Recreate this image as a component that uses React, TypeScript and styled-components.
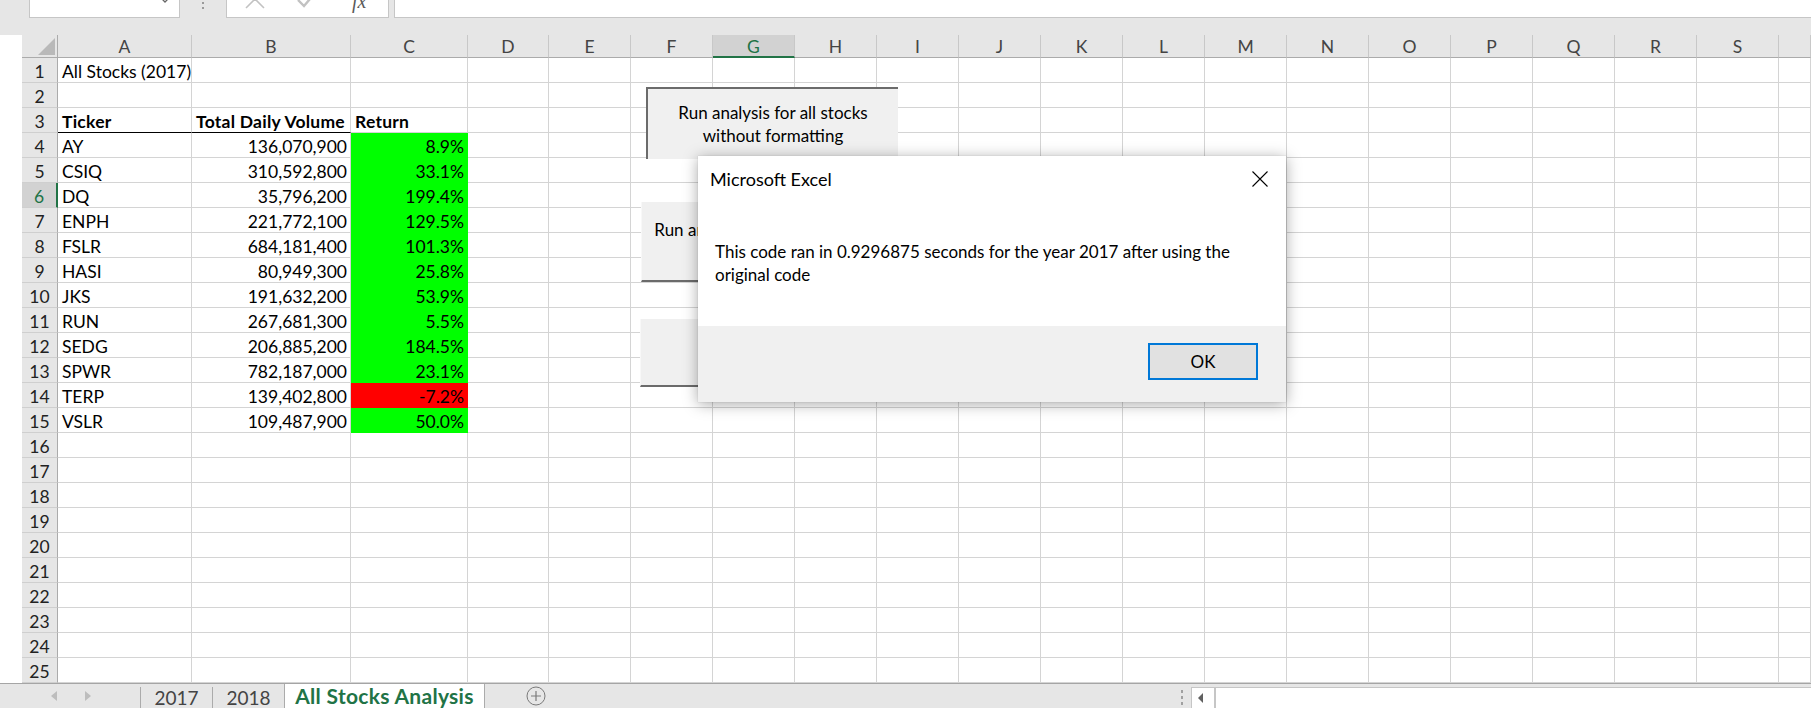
import React from "react";
import styled, { createGlobalStyle } from "styled-components";

const GlobalStyle = createGlobalStyle`
  html, body { margin: 0; padding: 0; background: #ffffff; }
  body { width: 1811px; height: 708px; overflow: hidden; font-family: Lato, "Liberation Sans", sans-serif; }
  *, *::before, *::after { box-sizing: border-box; }
`;

const Window = styled.div`
  position: relative;
  width: 1811px;
  height: 708px;
  display: flex;
  flex-direction: column;
  overflow: hidden;
  background: #ffffff;
  color: #000;
`;

/* ---------- formula bar ---------- */
const FormulaBar = styled.div`
  flex: none;
  height: 18px;
  display: flex;
  align-items: stretch;
  background: #e6e6e6;
  overflow: hidden;
  padding-left: 29px;
`;

const NameBox = styled.div`
  width: 151px;
  background: #ffffff;
  border: 1px solid #c6c6c6;
  border-top: none;
  display: flex;
  justify-content: flex-end;
  align-items: flex-start;
  padding-right: 9px;
`;

const Grip = styled.div`
  width: 46px;
  display: flex;
  flex-direction: column;
  align-items: center;
  gap: 3px;
  margin-top: -3px;
`;

const GripDot = styled.span`
  width: 2px;
  height: 2px;
  background: #9a9a9a;
`;

const FxBox = styled.div`
  width: 163px;
  background: #ffffff;
  border: 1px solid #c6c6c6;
  border-top: none;
  display: flex;
  align-items: flex-start;
  padding-left: 18px;
  gap: 31px;
`;

const FxIcon = styled.span`
  display: block;
  margin-top: -11px;
  line-height: 0;
`;

const FxText = styled.span`
  font-family: "Liberation Serif", "DejaVu Serif", serif;
  font-style: italic;
  font-size: 20px;
  line-height: 20px;
  color: #5a5a5a;
  margin-top: -9px;
  margin-left: 5px;
`;

const FormulaInput = styled.div`
  flex: 1;
  margin-left: 5px;
  background: #ffffff;
  border: 1px solid #c6c6c6;
  border-top: none;
  border-right: none;
`;

const HeaderGap = styled.div`
  flex: none;
  height: 17px;
  background: #e6e6e6;
`;

/* ---------- sheet grid ---------- */
const Sheet = styled.div`
  flex: none;
  height: 648px;
  padding-left: 22px;
  display: grid;
  grid-template-columns: 36px 134px 159px 117px 81px repeat(15, 82px) 1fr;
  grid-template-rows: 23px repeat(25, 25px);
  font-size: 17.5px;
`;

const Corner = styled.div`
  background: #e6e6e6;
  border-right: 1px solid #ababab;
  border-bottom: 1px solid #ababab;
  display: flex;
  align-items: flex-end;
  justify-content: flex-end;
  padding: 0 2px 2px 0;
`;

const ColHeader = styled.div<{ $active?: boolean }>`
  background: ${(p) => (p.$active ? "#d2d2d2" : "#e6e6e6")};
  color: ${(p) => (p.$active ? "#217346" : "#444444")};
  border-right: 1px solid #c8c8c8;
  border-bottom: ${(p) => (p.$active ? "2px solid #217346" : "1px solid #ababab")};
  display: flex;
  align-items: center;
  justify-content: center;
  line-height: 21px;
  padding-top: 1px;
`;

const RowHeader = styled.div<{ $active?: boolean }>`
  background: ${(p) => (p.$active ? "#d2d2d2" : "#e6e6e6")};
  color: ${(p) => (p.$active ? "#217346" : "#222222")};
  border-right: ${(p) => (p.$active ? "2px solid #217346" : "1px solid #ababab")};
  border-bottom: 1px solid #cfcfcf;
  display: flex;
  align-items: flex-end;
  justify-content: center;
  line-height: 21px;
`;

const Cell = styled.div<{
  $align?: "left" | "right";
  $bold?: boolean;
  $fill?: string;
  $underline?: boolean;
}>`
  display: flex;
  align-items: flex-end;
  justify-content: ${(p) => (p.$align === "right" ? "flex-end" : "flex-start")};
  padding: 0 3px 0 4px;
  line-height: 21px;
  white-space: nowrap;
  font-weight: ${(p) => (p.$bold ? 700 : 400)};
  letter-spacing: ${(p) => (p.$bold ? "0.25px" : "0")};
  background: ${(p) => p.$fill ?? "transparent"};
  border-right: 1px solid ${(p) => p.$fill ?? "#d4d4d4"};
  border-bottom: 1px solid
    ${(p) => (p.$underline ? "#000000" : p.$fill ?? "#d4d4d4")};
`;

/* ---------- sheet tabs ---------- */
const TabBar = styled.div`
  flex: none;
  height: 25px;
  display: flex;
  align-items: stretch;
  background: #e6e6e6;
  border-top: 1px solid #a5a5a5;
  font-size: 19px;
  line-height: 24px;
`;

const NavArea = styled.div`
  width: 140px;
  display: flex;
  align-items: center;
  padding-left: 51px;
  gap: 28px;
`;

const NavArrow = styled.span<{ $dir: "left" | "right" }>`
  width: 0;
  height: 0;
  border-top: 5px solid transparent;
  border-bottom: 5px solid transparent;
  ${(p) =>
    p.$dir === "left"
      ? "border-right: 6px solid #bdbdbd;"
      : "border-left: 6px solid #bdbdbd;"}
`;

const Tab = styled.div<{ $active?: boolean; $width: number }>`
  width: ${(p) => p.$width}px;
  display: flex;
  justify-content: center;
  border-left: 1px solid #ababab;
  border-right: ${(p) => (p.$active ? "1px solid #ababab" : "none")};
  margin-top: ${(p) => (p.$active ? "0" : "3px")};
  line-height: ${(p) => (p.$active ? "24px" : "21px")};
  background: ${(p) => (p.$active ? "#ffffff" : "transparent")};
  color: ${(p) => (p.$active ? "#217346" : "#444444")};
  font-weight: ${(p) => (p.$active ? 700 : 400)};
  font-size: ${(p) => (p.$active ? "21px" : "19px")};
  letter-spacing: ${(p) => (p.$active ? "0.3px" : "0")};
  white-space: nowrap;
`;

const AddSheet = styled.div`
  margin-left: 41px;
  display: flex;
  align-items: center;
`;

const TabSpacer = styled.div`
  flex: 1;
`;

const BottomGrip = styled.div`
  width: 19px;
  display: flex;
  flex-direction: column;
  align-items: center;
  justify-content: center;
  gap: 3px;
  padding-top: 2px;
`;

const BottomDot = styled.span`
  width: 2px;
  height: 3px;
  background: #a0a0a0;
`;

const HScroll = styled.div`
  width: 620px;
  margin-top: 3px;
  background: #ffffff;
  border-top: 1px solid #c6c6c6;
  border-left: 1px solid #c6c6c6;
  display: flex;
`;

const ScrollArrowBox = styled.div`
  width: 24px;
  border-right: 2px solid #c6c6c6;
  display: flex;
  align-items: center;
  justify-content: center;
  padding-right: 6px;
`;

const ScrollArrow = styled.span`
  width: 0;
  height: 0;
  border-top: 5px solid transparent;
  border-bottom: 5px solid transparent;
  border-right: 5px solid #606060;
`;

/* ---------- floating shapes ---------- */
const ShapeButton = styled.div<{
  $left: number;
  $top: number;
  $width: number;
  $height: number;
  $raised?: boolean;
}>`
  position: absolute;
  left: ${(p) => p.$left}px;
  top: ${(p) => p.$top}px;
  width: ${(p) => p.$width}px;
  height: ${(p) => p.$height}px;
  background: #f0f0f0;
  border-top: ${(p) => (p.$raised ? "2px solid #6b6b6b" : "none")};
  border-left: ${(p) => (p.$raised ? "2px solid #6b6b6b" : "1px solid #f8f8f8")};
  border-bottom: ${(p) => (p.$raised ? "none" : "2px solid #6b6b6b")};
  display: flex;
  align-items: center;
  justify-content: center;
  text-align: center;
  font-size: 17px;
  line-height: 23px;
  white-space: nowrap;
`;

/* ---------- message box ---------- */
const Dialog = styled.div`
  position: absolute;
  left: 698px;
  top: 156px;
  width: 588px;
  height: 246px;
  background: #ffffff;
  box-shadow: 0 2px 14px rgba(0, 0, 0, 0.34), 0 0 1px rgba(0, 0, 0, 0.2);
  display: flex;
  flex-direction: column;
`;

const DialogTitleBar = styled.div`
  height: 46px;
  display: flex;
  align-items: center;
  justify-content: space-between;
  padding: 0 18px 0 12px;
  font-size: 18px;
`;

const CloseIcon = styled.span`
  display: block;
  line-height: 0;
`;

const DialogBody = styled.div`
  flex: 1;
  padding: 39px 17px 0 17px;
  font-size: 17px;
  line-height: 22.5px;
`;

const DialogFooter = styled.div`
  height: 76px;
  background: #f0f0f0;
  display: flex;
  justify-content: flex-end;
  align-items: flex-start;
  padding: 17px 28px 0 0;
`;

const OkButton = styled.div`
  width: 110px;
  height: 37px;
  border: 2px solid #0078d7;
  background: #e1e1e1;
  display: flex;
  align-items: center;
  justify-content: center;
  font-size: 17px;
`;

const COLS = ["A", "B", "C", "D", "E", "F", "G", "H", "I", "J", "K", "L", "M", "N", "O", "P", "Q", "R", "S"];

const STOCKS: [string, string, string][] = [
  ["AY", "136,070,900", "8.9%"],
  ["CSIQ", "310,592,800", "33.1%"],
  ["DQ", "35,796,200", "199.4%"],
  ["ENPH", "221,772,100", "129.5%"],
  ["FSLR", "684,181,400", "101.3%"],
  ["HASI", "80,949,300", "25.8%"],
  ["JKS", "191,632,200", "53.9%"],
  ["RUN", "267,681,300", "5.5%"],
  ["SEDG", "206,885,200", "184.5%"],
  ["SPWR", "782,187,000", "23.1%"],
  ["TERP", "139,402,800", "-7.2%"],
  ["VSLR", "109,487,900", "50.0%"],
];

function renderCell(row: number, col: string) {
  const key = `${col}${row}`;
  if (row === 1 && col === "A") return <Cell key={key}>All Stocks (2017)</Cell>;
  if (row === 3) {
    if (col === "A") return <Cell key={key} $bold $underline>Ticker</Cell>;
    if (col === "B") return <Cell key={key} $bold $underline>Total Daily Volume</Cell>;
    if (col === "C") return <Cell key={key} $bold>Return</Cell>;
  }
  if (row >= 4 && row <= 15) {
    const [ticker, volume, ret] = STOCKS[row - 4];
    if (col === "A") return <Cell key={key}>{ticker}</Cell>;
    if (col === "B") return <Cell key={key} $align="right">{volume}</Cell>;
    if (col === "C") {
      const fill = ret.startsWith("-") ? "#ff0000" : "#00ff00";
      return (
        <Cell key={key} $align="right" $fill={fill}>
          {ret}
        </Cell>
      );
    }
  }
  return <Cell key={key} />;
}

export default function App() {
  const rows = Array.from({ length: 25 }, (_, i) => i + 1);
  return (
    <>
      <GlobalStyle />
      <Window>
        <FormulaBar>
          <NameBox>
            <svg width="10" height="6" viewBox="0 0 10 6" style={{ marginTop: -3 }}>
              <path d="M1 1 L5 5 L9 1" fill="none" stroke="#666" strokeWidth="1.3" />
            </svg>
          </NameBox>
          <Grip>
            <GripDot />
            <GripDot />
            <GripDot />
          </Grip>
          <FxBox>
            <FxIcon>
              <svg width="20" height="20" viewBox="0 0 20 20">
                <path d="M1 1 L19 19 M19 1 L1 19" stroke="#c2c2c2" strokeWidth="1.6" fill="none" />
              </svg>
            </FxIcon>
            <FxIcon>
              <svg width="20" height="20" viewBox="0 0 20 20">
                <path d="M2 11 L8 17 L19 4" stroke="#c2c2c2" strokeWidth="2.4" fill="none" />
              </svg>
            </FxIcon>
            <FxText>fx</FxText>
          </FxBox>
          <FormulaInput />
        </FormulaBar>
        <HeaderGap />
        <Sheet>
          <Corner>
            <svg width="17" height="17" viewBox="0 0 17 17">
              <polygon points="17,0 17,17 0,17" fill="#b9b9b9" />
            </svg>
          </Corner>
          {COLS.map((c) => (
            <ColHeader key={c} $active={c === "G"}>
              {c}
            </ColHeader>
          ))}
          <ColHeader />
          {rows.map((r) => (
            <React.Fragment key={r}>
              <RowHeader $active={r === 6}>{r}</RowHeader>
              {COLS.map((c) => renderCell(r, c))}
              <Cell />
            </React.Fragment>
          ))}
        </Sheet>
        <TabBar>
          <NavArea>
            <NavArrow $dir="left" />
            <NavArrow $dir="right" />
          </NavArea>
          <Tab $width={72}>2017</Tab>
          <Tab $width={72}>2018</Tab>
          <Tab $width={201} $active>
            All Stocks Analysis
          </Tab>
          <AddSheet>
            <svg width="20" height="20" viewBox="0 0 20 20">
              <circle cx="10" cy="10" r="9" fill="none" stroke="#7a7a7a" strokeWidth="1" />
              <path d="M10 5 V15 M5 10 H15" stroke="#7a7a7a" strokeWidth="1.2" />
            </svg>
          </AddSheet>
          <TabSpacer />
          <BottomGrip>
            <BottomDot />
            <BottomDot />
            <BottomDot />
          </BottomGrip>
          <HScroll>
            <ScrollArrowBox>
              <ScrollArrow />
            </ScrollArrowBox>
          </HScroll>
        </TabBar>

        <ShapeButton $left={646} $top={87} $width={252} $height={72} $raised>
          Run analysis for all stocks
          <br />
          without formatting
        </ShapeButton>
        <ShapeButton $left={641} $top={202} $width={252} $height={80}>
          Run analysis for all stocks with
          <br />
          formatting
        </ShapeButton>
        <ShapeButton $left={640} $top={319} $width={252} $height={68}>
          Clear Worksheet
        </ShapeButton>

        <Dialog>
          <DialogTitleBar>
            <span>Microsoft Excel</span>
            <CloseIcon>
              <svg width="16" height="16" viewBox="0 0 16 16">
                <path d="M0.5 0.5 L15.5 15.5 M15.5 0.5 L0.5 15.5" stroke="#000" strokeWidth="1.1" fill="none" />
              </svg>
            </CloseIcon>
          </DialogTitleBar>
          <DialogBody>
            This code ran in 0.9296875 seconds for the year 2017 after using the
            <br />
            original code
          </DialogBody>
          <DialogFooter>
            <OkButton>OK</OkButton>
          </DialogFooter>
        </Dialog>
      </Window>
    </>
  );
}
